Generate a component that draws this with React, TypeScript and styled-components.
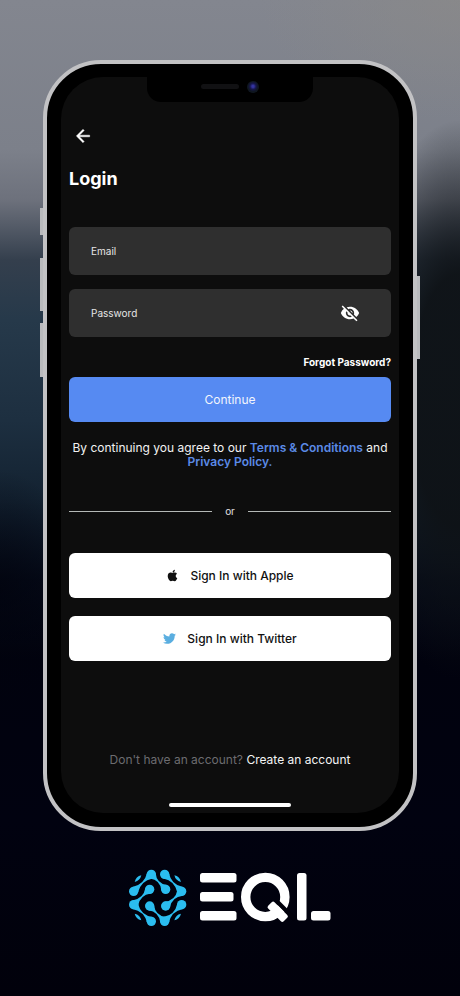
import React, { useState } from "react";
import styled, { createGlobalStyle } from "styled-components";
import { FaApple, FaTwitter } from "react-icons/fa";
import { MdVisibilityOff, MdVisibility, MdArrowBack } from "react-icons/md";

const GlobalStyle = createGlobalStyle`
  *, *::before, *::after { box-sizing: border-box; }
  body {
    margin: 0;
    background: #01020c;
    font-family: Inter, "Liberation Sans", sans-serif;
    -webkit-font-smoothing: antialiased;
  }
  button, input { font-family: inherit; }
  a { color: inherit; text-decoration: none; }
`;

const Stage = styled.main`
  min-height: 100vh;
  padding: 60px 43px 70px;
  display: flex;
  flex-direction: column;
  align-items: center;
  background:
    radial-gradient(ellipse 80px 120px at 0% 590px, rgba(1, 3, 13, 0.7), transparent),
    radial-gradient(ellipse 110px 280px at 100% 400px, rgba(14, 18, 22, 0.95) 45%, transparent),
    radial-gradient(ellipse 200px 120px at 100% 0, rgba(140, 138, 135, 0.6), transparent),
    linear-gradient(180deg, #83868f 0, #7c808a 150px, #6d717c 200px, #343f4d 260px, #26394a 320px, #1d2f40 420px, #132231 500px, #050a18 580px, #01020e 660px, #010210 820px, #01010b 996px);
`;

const Phone = styled.section`
  position: relative;
  width: 100%;
  padding: 13px 14px 14px;
  border: 4px solid #c2c2c4;
  border-radius: 58px;
  background: #000;
`;

const SideKey = styled.span<{ $side: "left" | "right"; $top: number; $length: number }>`
  position: absolute;
  ${(p) => p.$side}: -7px;
  top: ${(p) => p.$top}px;
  width: 3px;
  height: ${(p) => p.$length}px;
  background: #b9babd;
`;

const Screen = styled.div`
  display: flex;
  flex-direction: column;
  padding: 0 8px 6px;
  border-radius: 42px;
  background: #0d0d0d;
`;

const Notch = styled.div`
  display: flex;
  align-items: center;
  justify-content: center;
  gap: 8px;
  width: 166px;
  height: 25px;
  padding-bottom: 6px;
  align-self: center;
  border-radius: 0 0 14px 14px;
  background: #000;
`;

const Speaker = styled.span`
  width: 38px;
  height: 5px;
  border-radius: 3px;
  background: #111113;
`;

const Camera = styled.span`
  width: 12px;
  height: 12px;
  border-radius: 50%;
  background: radial-gradient(circle at 50% 45%, #3434a0 0 1px, #16164c 3px, #0f1620 5px);
`;

const BackButton = styled.button`
  display: flex;
  width: 30px;
  height: 28px;
  margin-top: 20px;
  padding: 4px;
  border: 0;
  background: none;
  color: #fff;
  font-size: 20px;
  cursor: pointer;
  path:last-child { stroke: currentColor; stroke-width: 0.5; }
`;

const Title = styled.h1`
  margin: 17px 0 36px;
  font-size: 18px;
  line-height: 24px;
  font-weight: 700;
  color: #fff;
`;

const Form = styled.form`
  display: flex;
  flex-direction: column;
`;

const Field = styled.label`
  display: flex;
  align-items: center;
  height: 48px;
  margin-bottom: 14px;
  padding: 0 31px 0 22px;
  border-radius: 6px;
  background: #2f2f2f;
`;

const FieldInput = styled.input`
  flex: 1;
  min-width: 0;
  height: 100%;
  padding: 0;
  border: 0;
  outline: 0;
  background: none;
  color: #fff;
  font-size: 10px;
  &::placeholder { color: #e6e6e6; opacity: 1; }
`;

const RevealButton = styled.button`
  display: flex;
  padding: 0;
  border: 0;
  background: none;
  color: #fff;
  font-size: 20px;
  cursor: pointer;
`;

const ForgotLink = styled.a`
  align-self: flex-end;
  margin: 4px 0 8px;
  font-size: 10px;
  line-height: 14px;
  font-weight: 700;
  color: #fff;
`;

const ActionButton = styled.button<{ $primary?: boolean }>`
  display: flex;
  align-items: center;
  justify-content: center;
  gap: 11px;
  width: 100%;
  height: 45px;
  padding: 0;
  border: 0;
  border-radius: 6px;
  background: ${(p) => (p.$primary ? "#568af2" : "#fff")};
  color: ${(p) => (p.$primary ? "#f2f5fc" : "#111")};
  font-size: 12px;
  font-weight: ${(p) => (p.$primary ? 400 : 500)};
  cursor: pointer;
`;

const Terms = styled.p`
  margin: 19px 0 35px;
  text-align: center;
  font-size: 12px;
  line-height: 14px;
  color: #f2f2f2;
  a { color: #5b8ae6; font-weight: 600; }
`;

const Divider = styled.div`
  display: flex;
  align-items: center;
  gap: 13px;
  margin-bottom: 35px;
  color: #e0e0e0;
  font-size: 10px;
  line-height: 14px;
  &::before, &::after {
    content: "";
    flex: 1;
    height: 1px;
    background: #b4b8b6;
  }
`;

const Providers = styled.div`
  display: flex;
  flex-direction: column;
  gap: 18px;
`;

const ProviderIcon = styled.span<{ $color: string }>`
  display: flex;
  color: ${(p) => p.$color};
  font-size: 13px;
`;

const SignUp = styled.p`
  margin: 91px 0 35px;
  text-align: center;
  font-size: 12px;
  line-height: 16px;
  color: #6c6c70;
  a { color: #f4f4f4; }
`;

const HomeBar = styled.span`
  align-self: center;
  width: 122px;
  height: 4px;
  border-radius: 2px;
  background: #fff;
`;

const Brand = styled.footer`
  display: flex;
  align-items: center;
  gap: 13px;
  margin-top: 38px;
`;

type Point = [number, number];

const nodes: Point[] = [
  [93, 42], [133, 42],
  [40, 93], [88, 87], [136, 87], [184, 93],
  [40, 133], [88, 137], [136, 137], [184, 133],
  [93, 183], [133, 183],
];

const links: [Point, Point][] = [
  [[93, 42], [40, 93]],
  [[93, 42], [136, 87]],
  [[133, 42], [184, 93]],
  [[88, 87], [40, 133]],
  [[136, 137], [184, 93]],
  [[40, 133], [93, 183]],
  [[88, 137], [133, 183]],
  [[184, 133], [133, 183]],
];

const petals: [number, number, number][] = [
  [53, 55, -45], [172, 55, 45], [53, 170, 45], [172, 170, -45],
];

const Emblem = () => (
  <svg width="58" height="58" viewBox="26 26 174 174" fill="#2bbdf0" aria-hidden="true">
    {nodes.map(([x, y]) => (
      <circle key={`${x}-${y}`} cx={x} cy={y} r="14" />
    ))}
    {links.map(([[x1, y1], [x2, y2]], i) => {
      const length = Math.hypot(x2 - x1, y2 - y1);
      const angle = (Math.atan2(y2 - y1, x2 - x1) * 180) / Math.PI;
      const end = length - 6;
      return (
        <path
          key={i}
          transform={`translate(${x1} ${y1}) rotate(${angle})`}
          d={`M6 -12 Q${length / 2} 8 ${end} -12 V12 Q${length / 2} -8 6 12 Z`}
        />
      );
    })}
    {petals.map(([x, y, angle]) => (
      <path key={`${x}-${y}`} transform={`translate(${x} ${y}) rotate(${angle})`} d="M-14 0 Q0 -9 14 0 Q0 9 -14 0 Z" />
    ))}
  </svg>
);

const Wordmark = () => (
  <svg width="131" height="52" viewBox="0 0 131 52" fill="#fff" role="img" aria-label="EQL">
    <rect x="0" y="1" width="36.5" height="9.5" rx="2.5" />
    <rect x="0" y="20" width="33.5" height="9.5" rx="2.5" />
    <rect x="0" y="39" width="36.5" height="9.5" rx="2.5" />
    <circle cx="65.3" cy="25" r="19.6" fill="none" stroke="#fff" strokeWidth="9.4" />
    <line x1="77" y1="29.5" x2="95" y2="47.5" stroke="#01010b" strokeWidth="4.5" />
    <rect x="-10" y="-4.5" width="22" height="9" rx="2" transform="translate(77 39) rotate(45)" />
    <rect x="97" y="1" width="9.5" height="47.5" rx="2.5" />
    <rect x="111" y="39" width="19.5" height="9.5" rx="2.5" />
  </svg>
);

export default function App() {
  const [visible, setVisible] = useState(false);
  return (
    <>
      <GlobalStyle />
      <Stage>
        <Phone>
          <SideKey $side="left" $top={144} $length={27} />
          <SideKey $side="left" $top={194} $length={53} />
          <SideKey $side="left" $top={259} $length={54} />
          <SideKey $side="right" $top={212} $length={83} />
          <Screen>
            <Notch>
              <Speaker />
              <Camera />
            </Notch>
            <BackButton type="button" aria-label="Back">
              <MdArrowBack />
            </BackButton>
            <Title>Login</Title>
            <Form onSubmit={(e) => e.preventDefault()}>
              <Field>
                <FieldInput type="email" placeholder="Email" aria-label="Email" />
              </Field>
              <Field>
                <FieldInput type={visible ? "text" : "password"} placeholder="Password" aria-label="Password" />
                <RevealButton type="button" aria-label="Toggle password visibility" onClick={() => setVisible(!visible)}>
                  {visible ? <MdVisibility /> : <MdVisibilityOff />}
                </RevealButton>
              </Field>
              <ForgotLink href="#forgot">Forgot Password?</ForgotLink>
              <ActionButton type="submit" $primary>Continue</ActionButton>
            </Form>
            <Terms>
              By continuing you agree to our <a href="#terms">Terms &amp; Conditions</a> and <a href="#privacy">Privacy Policy.</a>
            </Terms>
            <Divider>or</Divider>
            <Providers>
              <ActionButton type="button">
                <ProviderIcon $color="#111"><FaApple /></ProviderIcon>
                Sign In with Apple
              </ActionButton>
              <ActionButton type="button">
                <ProviderIcon $color="#5aaee0"><FaTwitter /></ProviderIcon>
                Sign In with Twitter
              </ActionButton>
            </Providers>
            <SignUp>
              Don't have an account? <a href="#signup">Create an account</a>
            </SignUp>
            <HomeBar />
          </Screen>
        </Phone>
        <Brand>
          <Emblem />
          <Wordmark />
        </Brand>
      </Stage>
    </>
  );
}
